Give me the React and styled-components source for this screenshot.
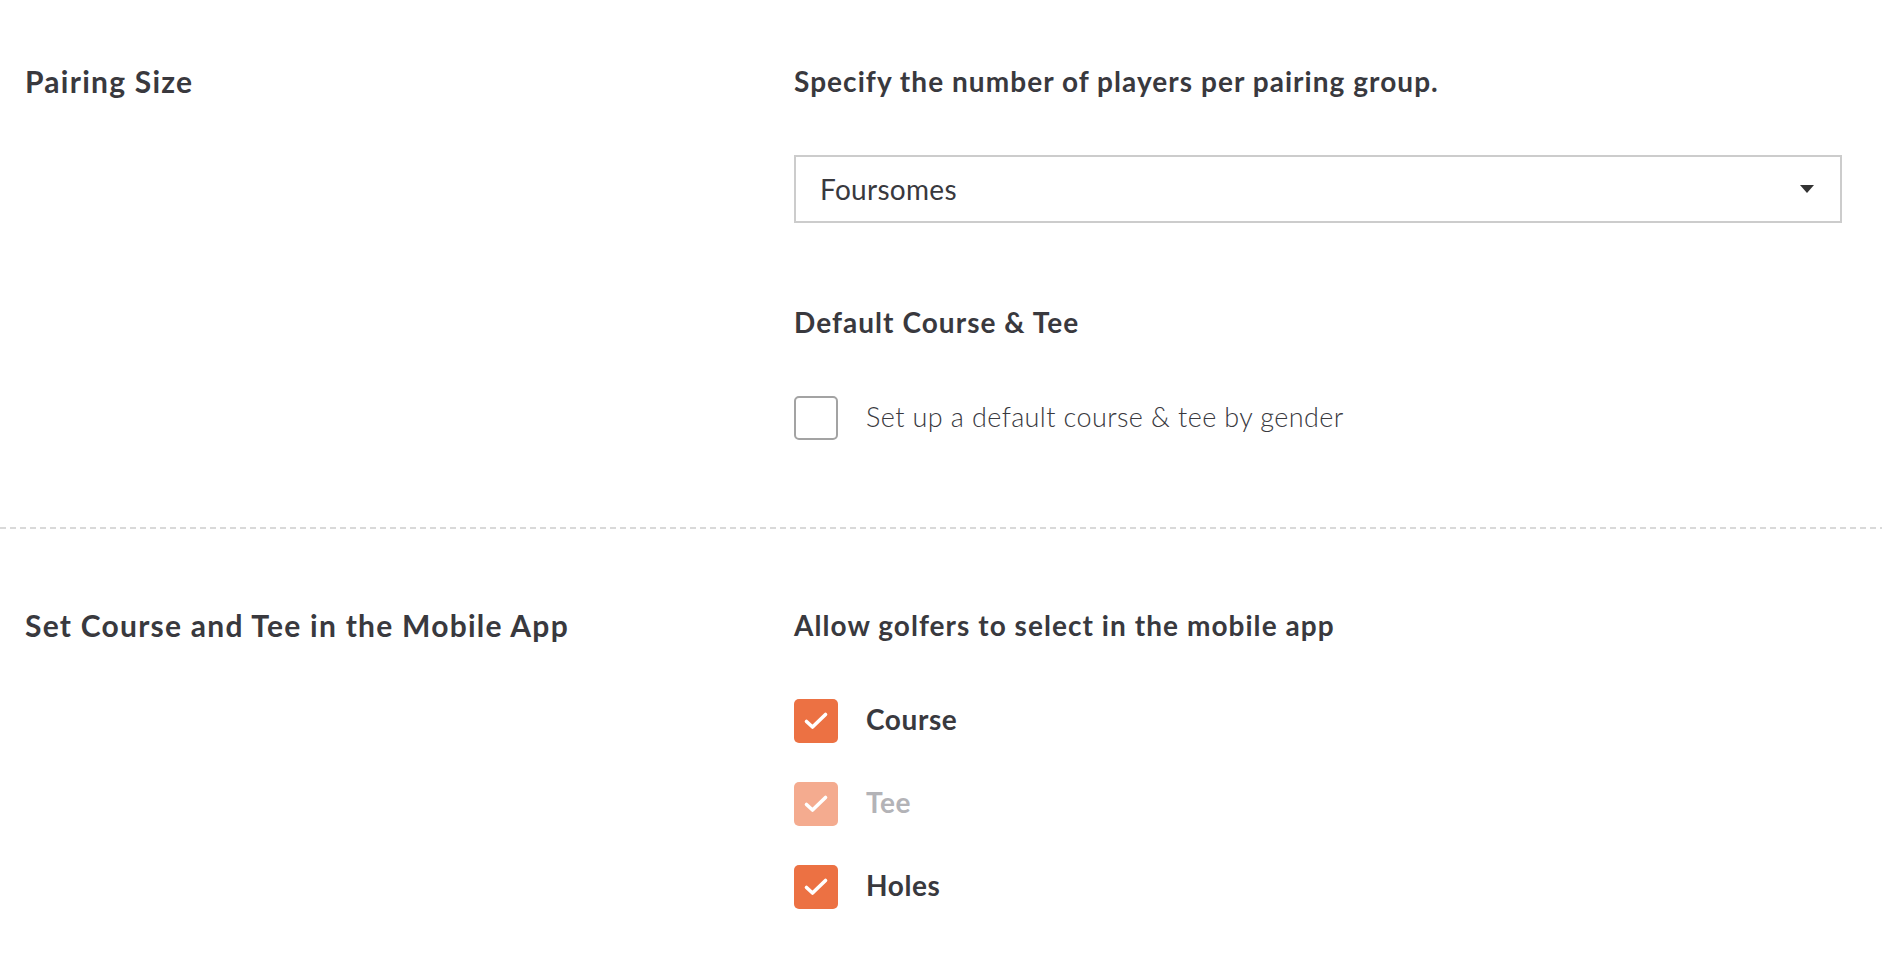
import React, { useState } from 'react';
import styled, { createGlobalStyle } from 'styled-components';

const COLORS = {
  text: '#39393e',
  muted: '#b3b3b7',
  orange: '#ec7143',
  orangeLight: '#f4ab8f',
  border: '#cccccc',
  dash: '#d9d9d9',
};

const GlobalStyle = createGlobalStyle`
  html, body {
    margin: 0;
    padding: 0;
    background: #ffffff;
  }
  body {
    font-family: 'Lato', 'Open Sans', sans-serif;
    color: ${COLORS.text};
  }
`;

const Page = styled.div`
  width: 1882px;
`;

const Section = styled.section`
  display: grid;
  grid-template-columns: 769px 1fr;
  padding: ${(props) => props.$pad};
`;

const Divider = styled.div`
  height: 2px;
  background-image: linear-gradient(to right, ${COLORS.dash} 6px, transparent 6px);
  background-size: 10px 2px;
`;

const Heading = styled.h2`
  margin: 0;
  font-size: 30px;
  line-height: 36px;
  font-weight: 700;
  letter-spacing: 1.25px;
`;

const Body = styled.div`
  display: flex;
  flex-direction: column;
`;

const Description = styled.p`
  margin: 0;
  font-size: 28px;
  line-height: 36px;
  font-weight: 700;
  letter-spacing: 1.05px;
  margin-top: ${(props) => props.$top || '0'};
`;

const SelectBox = styled.div`
  margin-top: 56px;
  height: 68px;
  box-sizing: border-box;
  border: 2px solid ${COLORS.border};
  display: flex;
  align-items: center;
  justify-content: space-between;
  padding: 0 24px;
  font-size: 28px;
  font-weight: 400;
  letter-spacing: 0.3px;
  cursor: pointer;
`;

const Caret = styled.span`
  width: 0;
  height: 0;
  border-left: 7px solid transparent;
  border-right: 7px solid transparent;
  border-top: 8px solid #333333;
  margin-right: 2px;
`;

const CheckList = styled.div`
  display: flex;
  flex-direction: column;
  gap: 39px;
  margin-top: ${(props) => props.$top};
`;

const CheckRow = styled.label`
  display: flex;
  align-items: center;
  gap: 28px;
  cursor: ${(props) => (props.$disabled ? 'default' : 'pointer')};
`;

const Box = styled.span`
  width: 44px;
  height: 44px;
  box-sizing: border-box;
  border-radius: 5px;
  flex-shrink: 0;
  display: flex;
  align-items: center;
  justify-content: center;
  background: ${(props) =>
    props.$checked ? (props.$disabled ? COLORS.orangeLight : COLORS.orange) : '#ffffff'};
  border: ${(props) => (props.$checked ? 'none' : '2px solid #a3a3a3')};
`;

const CheckText = styled.span`
  font-size: ${(props) => (props.$light ? '27px' : '28px')};
  line-height: 36px;
  padding-bottom: ${(props) => (props.$light ? '3px' : '5px')};
  font-weight: ${(props) => (props.$light ? 300 : 700)};
  color: ${(props) => (props.$disabled ? COLORS.muted : COLORS.text)};
  letter-spacing: ${(props) => (props.$light ? '0.4px' : '0.6px')};
`;

const Tick = () => (
  <svg width="26" height="20" viewBox="0 0 26 20" fill="none">
    <path
      d="M3.5 10.5 L9.5 16 L22.5 3.5"
      stroke="#ffffff"
      strokeWidth="3.6"
      strokeLinecap="round"
      strokeLinejoin="round"
    />
  </svg>
);

const Checkbox = ({ checked, disabled, light, label, onToggle }) => (
  <CheckRow $disabled={disabled} onClick={disabled ? undefined : onToggle}>
    <Box $checked={checked} $disabled={disabled}>
      {checked && <Tick />}
    </Box>
    <CheckText $light={light} $disabled={disabled}>
      {label}
    </CheckText>
  </CheckRow>
);

export default function App() {
  const [defaultTee, setDefaultTee] = useState(false);
  const [course, setCourse] = useState(true);
  const [holes, setHoles] = useState(true);

  return (
    <Page>
      <GlobalStyle />
      <Section $pad="63px 40px 87px 25px">
        <Heading>Pairing Size</Heading>
        <Body>
          <Description>Specify the number of players per pairing group.</Description>
          <SelectBox>
            <span>Foursomes</span>
            <Caret />
          </SelectBox>
          <Description $top="81px">Default Course &amp; Tee</Description>
          <CheckList $top="56px">
            <Checkbox
              light
              checked={defaultTee}
              label="Set up a default course & tee by gender"
              onToggle={() => setDefaultTee(!defaultTee)}
            />
          </CheckList>
        </Body>
      </Section>
      <Divider />
      <Section $pad="78px 40px 60px 25px">
        <Heading>Set Course and Tee in the Mobile App</Heading>
        <Body>
          <Description>Allow golfers to select in the mobile app</Description>
          <CheckList $top="56px">
            <Checkbox checked={course} label="Course" onToggle={() => setCourse(!course)} />
            <Checkbox checked disabled label="Tee" />
            <Checkbox checked={holes} label="Holes" onToggle={() => setHoles(!holes)} />
          </CheckList>
        </Body>
      </Section>
    </Page>
  );
}
